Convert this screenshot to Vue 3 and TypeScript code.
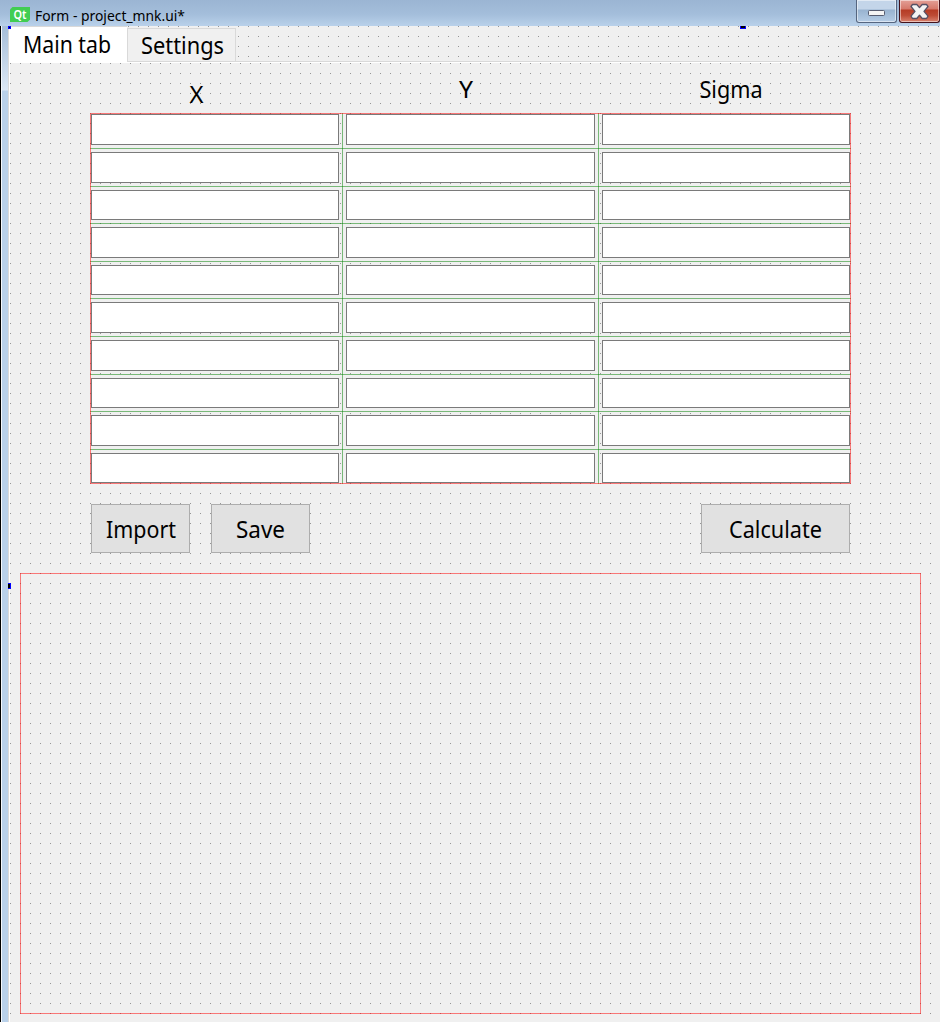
<script setup lang="ts">
interface Heading {
  text: string
  width: number
  left: number
  baseline: number
}

const headings: Heading[] = [
  { text: 'X', width: 14, left: 98.5, baseline: 28 },
  { text: 'Y', width: 14, left: 113, baseline: 23 },
  { text: 'Sigma', width: 63, left: 97.5, baseline: 23 },
]
const cells: number[] = Array.from({ length: 30 }, (_, i) => i)
const rowLines: number[] = [148, 186, 223, 261, 298, 336, 374, 411, 449].map((y) => y - 113)
const columnLines: number[] = [252, 508]
</script>

<template>
  <div class="window">
    <header class="titlebar">
      <svg class="logo" width="20" height="15" viewBox="0 0 20 15">
        <path d="M2.5 0H20V12.5L17.5 15H0V2.5Z" fill="#41cd52" />
        <text x="3.5" y="11.5" textLength="13" lengthAdjust="spacingAndGlyphs" class="logo-text">Qt</text>
      </svg>
      <svg class="title" width="150" height="26">
        <text x="0" y="21" textLength="150" lengthAdjust="spacingAndGlyphs">Form - project_mnk.ui*</text>
      </svg>
      <div class="controls">
        <button class="control minimize" aria-label="Minimize">
          <svg width="39" height="22" viewBox="0 0 39 22">
            <rect x="11.5" y="10.5" width="16" height="5" rx="1" fill="#f4f4f4" stroke="#565c70" />
          </svg>
        </button>
        <button class="control close" aria-label="Close">
          <svg width="39" height="22" viewBox="0 0 39 22">
            <path
              d="M12.5 4.5H16.8L19.5 7.6L22.2 4.5H26.5L28 6.5L24 11.3L28 16.2L26.5 18.5H22.2L19.5 15.2L16.8 18.5H12.5L11 16.2L15 11.3L11 6.5Z"
              fill="#f3f3f3"
              stroke="#565064"
              stroke-width="1.3"
              stroke-linejoin="round"
            />
          </svg>
        </button>
      </div>
    </header>

    <div class="body">
      <div class="edge"></div>
      <main class="form">
        <nav class="tabs">
          <div class="tab active">
            <svg width="88" height="36">
              <text x="0" y="27" textLength="88" lengthAdjust="spacingAndGlyphs">Main tab</text>
            </svg>
          </div>
          <div class="tab">
            <svg width="83" height="33">
              <text x="0" y="25" textLength="83" lengthAdjust="spacingAndGlyphs">Settings</text>
            </svg>
          </div>
        </nav>

        <section class="pane">
          <div class="headings">
            <div v-for="h in headings" :key="h.text" class="heading">
              <svg width="248" height="36">
                <text :x="h.left" :y="h.baseline" :textLength="h.width" lengthAdjust="spacingAndGlyphs">{{ h.text }}</text>
              </svg>
            </div>
          </div>

          <div class="table">
            <div v-for="c in cells" :key="c" class="field"></div>
            <svg class="guides" width="761" height="371" shape-rendering="crispEdges">
              <rect v-for="x in columnLines" :key="x" :x="x" y="0" width="1" height="371" class="green" />
              <rect v-for="y in rowLines" :key="y" x="0" :y="y" width="761" height="1" class="green" />
              <rect x="0.5" y="0.5" width="760" height="370" class="red" />
            </svg>
          </div>

          <div class="actions">
            <button class="action">
              <svg width="70" height="47">
                <text x="0" y="33" textLength="70" lengthAdjust="spacingAndGlyphs">Import</text>
              </svg>
            </button>
            <button class="action">
              <svg width="49" height="47">
                <text x="0" y="33" textLength="49" lengthAdjust="spacingAndGlyphs">Save</text>
              </svg>
            </button>
            <button class="action wide">
              <svg width="93" height="47">
                <text x="0" y="33" textLength="93" lengthAdjust="spacingAndGlyphs">Calculate</text>
              </svg>
            </button>
          </div>

          <div class="plot"></div>
        </section>
        <i class="handle corner"></i>
        <i class="handle top"></i>
        <i class="handle left"></i>
      </main>
    </div>
  </div>
</template>

<style>
body {
  margin: 0;
  background: #f0f0f0;
}
</style>

<style scoped>
.window {
  width: 940px;
  height: 1022px;
  overflow: hidden;
  display: flex;
  flex-direction: column;
  font-family: 'Noto Sans', 'Open Sans', sans-serif;
  font-size: 24px;
  color: #000;
}
svg {
  display: block;
  overflow: visible;
  flex: none;
}
button {
  padding: 0;
  margin: 0;
  font: inherit;
  color: inherit;
}
.titlebar {
  height: 26px;
  flex: none;
  display: flex;
  box-sizing: border-box;
  padding-left: 10px;
  background: linear-gradient(#9bb5d3, #a4bedb 55%, #b9d1ea);
}
.logo {
  margin-top: 7px;
}
.logo-text {
  font-size: 12.5px;
  font-weight: 600;
  fill: #fff;
}
.title {
  margin-left: 5px;
  font-size: 14.5px;
}
.controls {
  display: flex;
  gap: 2px;
  margin-left: auto;
}
.control {
  box-sizing: border-box;
  width: 41px;
  height: 23px;
  border: 1px solid #55657f;
  border-top: 0;
  border-radius: 0 0 3px 3px;
  box-shadow: inset 0 0 0 1px rgba(255, 255, 255, 0.5);
}
.minimize {
  background: linear-gradient(#c3d5e9 0 9px, #98b3d0 10px, #b5cce5);
}
.close {
  border-color: #43121b;
  background: linear-gradient(#e3a097, #d6786a 9px, #b53b25 10px, #bd4b35 70%, #d98370);
}
.body {
  flex: 1;
  display: flex;
  min-height: 0;
}
.edge {
  box-sizing: border-box;
  width: 8px;
  flex: none;
  border-left: 1px solid #000;
  box-shadow: inset 1px 0 #f4f8fc;
  background: linear-gradient(#a5bdd8, #dce8f5 64px, #b9d1ea 65px);
}
.form {
  position: relative;
  flex: 1;
  display: flex;
  flex-direction: column;
  min-width: 0;
}
.tabs {
  box-sizing: border-box;
  height: 37px;
  flex: none;
  display: flex;
  align-items: flex-start;
  background:
    linear-gradient(#d9d9d9 0 0) 0 35px / 100% 1px no-repeat,
    linear-gradient(#fff 0 0) 0 36px / 100% 1px no-repeat,
    linear-gradient(90deg, transparent 1px, #f0f0f0 1px) 0 0 / 10px 10px,
    linear-gradient(#969696 1px, #f0f0f0 1px) 0 0 / 10px 10px;
}
.tab {
  box-sizing: border-box;
  width: 109px;
  height: 34px;
  margin-top: 2px;
  padding-left: 13px;
  border: 1px solid #d9d9d9;
  background: #f0f0f0;
}
.tab.active {
  width: 119px;
  height: 37px;
  margin-top: 0;
  padding-left: 14px;
  border-width: 1px 0 0 1px;
  background: #fff;
}
.tab.active svg {
  margin-top: -1px;
}
.pane {
  box-sizing: border-box;
  flex: 1;
  min-height: 0;
  border-left: 1px solid #d9d9d9;
  box-shadow: inset 1px 0 #fff;
  background:
    linear-gradient(90deg, transparent 1px, #f0f0f0 1px) 1px 0 / 10px 10px,
    linear-gradient(#969696 1px, #f0f0f0 1px) 0 0 / 10px 10px;
}
.headings {
  display: grid;
  grid-template-columns: 248px 249px 248px;
  column-gap: 7px;
  height: 38px;
  padding: 12px 0 0 82px;
}
.heading {
  height: 36px;
}
.table {
  position: relative;
  box-sizing: border-box;
  width: 761px;
  height: 371px;
  margin-left: 81px;
  padding: 1px;
  display: grid;
  grid-template-columns: 248px 249px 248px;
  grid-template-rows: 31px 31px 30px 31px 30px 31px 31px 30px 31px 30px;
  column-gap: 7px;
  row-gap: 7px;
}
.field {
  border: 1px solid #7a7a7a;
  background: #fff;
}
.guides {
  position: absolute;
  inset: 0;
}
.green {
  fill: rgba(0, 128, 0, 0.5);
}
.red {
  fill: none;
  stroke: rgba(255, 0, 0, 0.5);
}
.actions {
  display: flex;
  gap: 21px;
  width: 759px;
  margin: 20px 0 0 82px;
}
.action {
  box-sizing: border-box;
  width: 99px;
  height: 49px;
  display: flex;
  align-items: center;
  justify-content: center;
  border: 1px solid #adadad;
  background: #e1e1e1;
}
.action.wide {
  width: 149px;
  margin-left: auto;
}
.plot {
  box-sizing: border-box;
  width: 901px;
  height: 441px;
  margin: 20px 0 0 11px;
  border: 1px solid rgba(255, 0, 0, 0.5);
}
.handle {
  position: absolute;
  box-sizing: border-box;
  border: 1px solid #00f;
  background: #000;
}
.corner {
  left: 0;
  top: 0;
  width: 3px;
  height: 3px;
}
.top {
  left: 732px;
  top: 0;
  width: 6px;
  height: 3px;
  border-top: 0;
}
.left {
  left: 0;
  top: 557px;
  width: 3px;
  height: 6px;
  border-left: 0;
}
</style>
